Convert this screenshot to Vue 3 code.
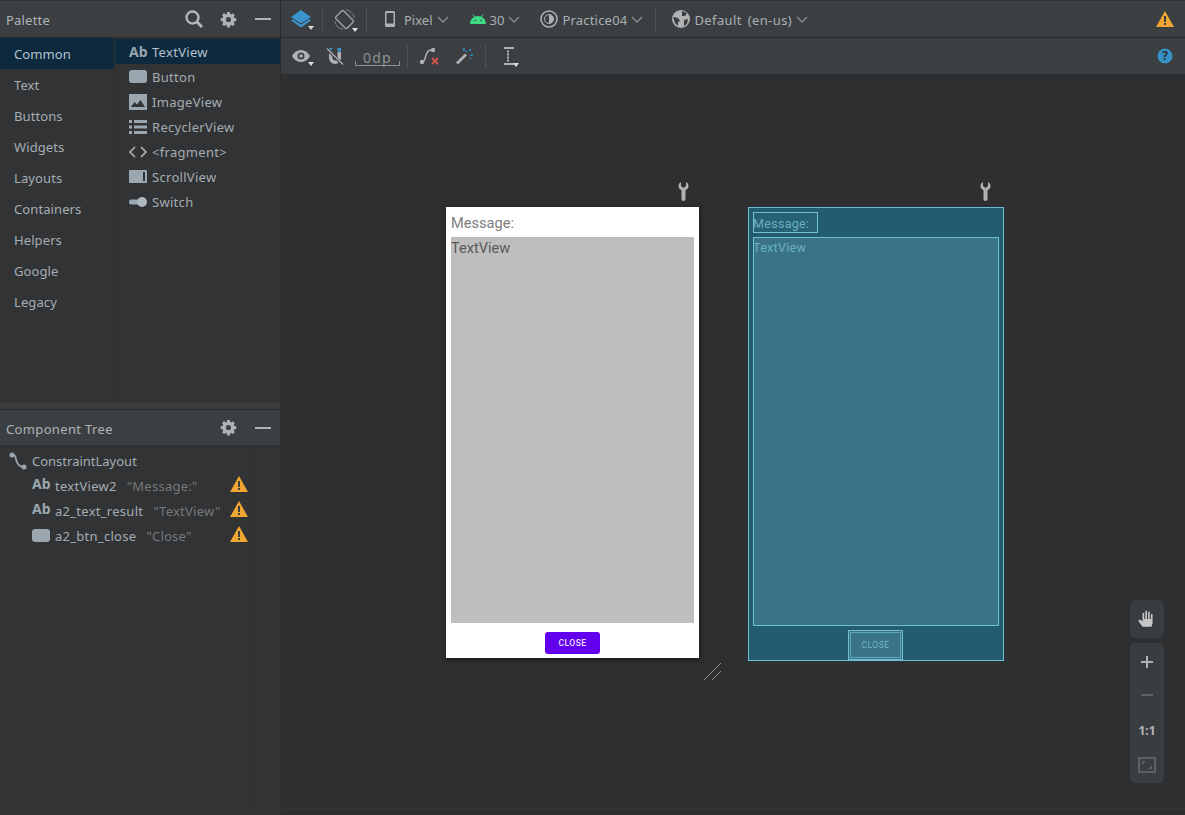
<script setup>
const categories = ['Common', 'Text', 'Buttons', 'Widgets', 'Layouts', 'Containers', 'Helpers', 'Google', 'Legacy']
const widgets = [
  { name: 'TextView', icon: 'ab' },
  { name: 'Button', icon: 'button' },
  { name: 'ImageView', icon: 'image' },
  { name: 'RecyclerView', icon: 'list' },
  { name: '<fragment>', icon: 'code' },
  { name: 'ScrollView', icon: 'scroll' },
  { name: 'Switch', icon: 'switch' }
]
const tree = [
  { id: 'textView2', value: '"Message:"', icon: 'ab' },
  { id: 'a2_text_result', value: '"TextView"', icon: 'ab' },
  { id: 'a2_btn_close', value: '"Close"', icon: 'button' }
]
const gearPath = 'M6.6 0h2.8l.4 2.1 1.2.5L12.8 1.4l2 2-1.2 1.8.5 1.2 2.1.4v2.8l-2.1.4-.5 1.2 1.2 1.8-2 2-1.8-1.2-1.2.5-.4 2.1H6.6l-.4-2.1-1.2-.5-1.8 1.2-2-2 1.2-1.8-.5-1.2L-.2 9.4V6.6l2.1-.4.5-1.2L1.2 3.2l2-2L5 2.6l1.2-.5zM8 5.3a2.7 2.7 0 1 0 0 5.4 2.7 2.7 0 0 0 0-5.4z'
const wrenchPath = 'M2.500 0v4L5 6l2.500-2V0C9.200.8 10 2.400 10 4c0 2-1.200 3.400-3 4.200V17a2 2 0 0 1-4 0V8.200C1.200 7.400 0 6 0 4 0 2.400.8.8 2.500 0z'
</script>

<template>
  <div class="studio">
    <aside class="side">
      <header class="head palette-head">
        <span class="head-title">Palette</span>
        <svg class="ic search" viewBox="0 0 18 18"><circle cx="7.500" cy="7.500" r="6" fill="none" stroke="#b4b8bb" stroke-width="2.400"/><path d="M11.500 11.500l5.500 5.500" stroke="#b4b8bb" stroke-width="3"/></svg>
        <svg class="ic gear" viewBox="-1 -1 18 18"><path :d="gearPath" fill="#afb1b3" fill-rule="evenodd"/></svg>
        <span class="minus"></span>
      </header>
      <div class="palette">
        <ul class="cats">
          <li v-for="(c, i) in categories" :key="c" :class="{ on: i === 0 }">{{ c }}</li>
        </ul>
        <ul class="widgets">
          <li v-for="(w, i) in widgets" :key="w.name" :class="{ on: i === 0 }">
            <span class="wicon">
              <b v-if="w.icon === 'ab'" class="ab">Ab</b>
              <span v-else-if="w.icon === 'button'" class="btn-ic"></span>
              <svg v-else-if="w.icon === 'image'" viewBox="0 0 18 16" width="18" height="16"><rect width="18" height="16" fill="#9aa7b0"/><path d="M2 13l3.500-5 2.500 2.500L11.500 6 16 13z" fill="#313335"/></svg>
              <svg v-else-if="w.icon === 'list'" viewBox="0 0 18 14" width="18" height="14"><path d="M0 0h3v3H0zM5 0h13v3H5zM0 5.500h3v3H0zM5 5.500h13v3H5zM0 11h3v3H0zM5 11h13v3H5z" fill="#9aa7b0"/></svg>
              <svg v-else-if="w.icon === 'code'" viewBox="0 0 18 12" width="18" height="12"><path d="M6 1L1 6l5 5M12 1l5 5-5 5" fill="none" stroke="#afb1b3" stroke-width="1.600"/></svg>
              <svg v-else-if="w.icon === 'scroll'" viewBox="0 0 18 13" width="18" height="13"><rect width="18" height="13" rx="1" fill="#9aa7b0"/><rect x="14" y="2" width="2" height="9" fill="#313335"/></svg>
              <svg v-else viewBox="0 0 18 10" width="18" height="10"><rect x="0" y="2.500" width="10" height="5" rx="2" fill="#9aa7b0"/><circle cx="13" cy="5" r="5" fill="#afb8bf"/></svg>
            </span>
            <span class="wname">{{ w.name }}</span>
          </li>
        </ul>
      </div>
      <div class="split"></div>
      <header class="head tree-head">
        <span class="head-title spaced">Component Tree</span>
        <svg class="ic gear" viewBox="-1 -1 18 18"><path :d="gearPath" fill="#afb1b3" fill-rule="evenodd"/></svg>
        <span class="minus"></span>
      </header>
      <div class="tree">
        <div class="tree-main">
          <div class="root">
            <svg viewBox="0 0 18 18" width="18" height="18"><path d="M3 3c4 0 3 1.500 4.500 6S11 15 15 15" fill="none" stroke="#9aa7b0" stroke-width="1.800"/><circle cx="3" cy="3" r="2.500" fill="#9aa7b0"/><circle cx="15" cy="15" r="2.500" fill="#9aa7b0"/></svg>
            <span>ConstraintLayout</span>
          </div>
          <div v-for="t in tree" :key="t.id" class="node">
            <span class="nicon">
              <b v-if="t.icon === 'ab'" class="ab">Ab</b>
              <span v-else class="btn-ic"></span>
            </span>
            <span class="nid">{{ t.id }}</span>
            <span class="nval">{{ t.value }}</span>
            <svg class="warn" viewBox="0 0 18 16" width="18" height="16"><path d="M9 0l9 16H0z" fill="#f0a732"/><path d="M8 5h2v6H8zM8 12h2v2H8z" fill="#3c3f41"/></svg>
          </div>
        </div>
        <div class="tree-gutter"></div>
      </div>
    </aside>

    <main class="main">
      <div class="bar bar-top">
        <span class="tool layers">
          <svg viewBox="0 0 20 18" width="20" height="18"><path d="M10 0l10 7-10 6.500L0 7z" fill="#3a95cf"/><path d="M0 10.500l2-1.300 8 5.500 8-5.500 2 1.300-10 7z" fill="#3a95cf"/></svg>
          <i class="corner"></i>
        </span>
        <span class="vsep"></span>
        <span class="tool rotate">
          <svg viewBox="0 0 21 21" width="21" height="21"><rect x="5" y="2.500" width="11" height="16" rx="1.500" transform="rotate(-45 10.500 10.500)" fill="none" stroke="#a2a4a6" stroke-width="1.300"/><path d="M12 .8A9.800 9.800 0 0 1 20.200 9M9 20.200A9.800 9.800 0 0 1 .8 12" fill="none" stroke="#7b7d80" stroke-width="1"/></svg>
          <i class="corner"></i>
        </span>
        <span class="vsep"></span>
        <span class="tool drop device">
          <svg viewBox="0 0 10 16" width="10" height="16"><path d="M1.500 0h7A1.500 1.500 0 0 1 10 1.500v13A1.500 1.500 0 0 1 8.500 16h-7A1.500 1.500 0 0 1 0 14.500v-13A1.500 1.500 0 0 1 1.500 0zM1.500 2v10.500h7V2z" fill="#afb1b3" fill-rule="evenodd"/></svg>
          <span>Pixel</span><svg class="chev" viewBox="0 0 12 7"><path d="M1 1l5 5 5-5" fill="none" stroke="#7f8b91" stroke-width="1.500"/></svg>
        </span>
        <span class="tool drop api">
          <svg viewBox="0 0 16 10" width="16" height="10"><path d="M0 10a8 8 0 0 1 16 0z" fill="#3ddc84"/><path d="M3 .5l2 3M13 .5l-2 3" stroke="#3ddc84" stroke-width="1"/><circle cx="5" cy="6.500" r=".8" fill="#3c3f41"/><circle cx="11" cy="6.500" r=".8" fill="#3c3f41"/></svg>
          <span>30</span><svg class="chev" viewBox="0 0 12 7"><path d="M1 1l5 5 5-5" fill="none" stroke="#7f8b91" stroke-width="1.500"/></svg>
        </span>
        <span class="tool drop theme">
          <svg viewBox="0 0 18 18" width="18" height="18"><circle cx="9" cy="9" r="8" fill="none" stroke="#afb1b3" stroke-width="1.500"/><circle cx="9" cy="9" r="4.500" fill="none" stroke="#afb1b3" stroke-width="1"/><path d="M9 4.500a4.500 4.500 0 0 1 0 9z" fill="#afb1b3"/></svg>
          <span>Practice04</span><svg class="chev" viewBox="0 0 12 7"><path d="M1 1l5 5 5-5" fill="none" stroke="#7f8b91" stroke-width="1.500"/></svg>
        </span>
        <span class="vsep"></span>
        <span class="tool drop locale">
          <svg viewBox="0 0 18 18" width="18" height="18"><circle cx="9" cy="9" r="9" fill="#afb1b3"/><path d="M1 7l5 1 2 3-2 1 0 4-3-3zM10 1l5 2-2 3-3 0zM12 10l4-1-1 5-3 2z" fill="#3c3f41"/></svg>
          <span>Default (en-us)</span><svg class="chev" viewBox="0 0 12 7"><path d="M1 1l5 5 5-5" fill="none" stroke="#7f8b91" stroke-width="1.500"/></svg>
        </span>
        <svg class="warn top-warn" viewBox="0 0 18 16" width="18" height="16"><path d="M9 0l9 16H0z" fill="#f0a732"/><path d="M8 5h2v6H8zM8 12h2v2H8z" fill="#3c3f41"/></svg>
      </div>
      <div class="bar bar-sub">
        <span class="tool eye">
          <svg viewBox="0 0 18 12" width="18" height="12"><path d="M0 6c4-8 14-8 18 0-4 8-14 8-18 0z" fill="#afb1b3"/><circle cx="9" cy="6" r="3.500" fill="#3c3f41"/><circle cx="9" cy="6" r="1.800" fill="#afb1b3"/></svg>
          <i class="corner"></i>
        </span>
        <span class="tool magnet">
          <svg viewBox="0 0 18 18" width="18" height="18"><path d="M3 5v6a6 6 0 0 0 12 0V5h-3.500v6a2.500 2.500 0 0 1-5 0V5z" fill="#afb1b3"/><path d="M11.500 1H15v3.500h-3.500z" fill="#3a95cf"/><path d="M3 1h3.500L5 3.500z" fill="#3a95cf"/><path d="M1 2l15 15" stroke="#3c3f41" stroke-width="3"/><path d="M1 1.500l16 16" stroke="#afb1b3" stroke-width="1.300"/></svg>
        </span>
        <span class="margin">0dp</span>
        <span class="vsep"></span>
        <span class="tool clear">
          <svg viewBox="0 0 20 18" width="20" height="18"><path d="M3 15c5 0 2-12 9-12" fill="none" stroke="#afb1b3" stroke-width="1.500"/><circle cx="3" cy="15" r="2.200" fill="#afb1b3"/><circle cx="14" cy="3" r="2.200" fill="#afb1b3"/><path d="M13 11l6 6M19 11l-6 6" stroke="#d9534f" stroke-width="1.800"/></svg>
        </span>
        <span class="tool wand">
          <svg viewBox="0 0 18 18" width="18" height="18"><path d="M1 15.500L10 6.500l2 2L3 17.500z" fill="#afb1b3"/><path d="M9 1v3M14 4l2-2M15 8h3M11 4l1 1M16 12l-1-1" stroke="#3592c4" stroke-width="1.500"/></svg>
        </span>
        <span class="vsep"></span>
        <span class="tool guide">
          <svg viewBox="0 0 14 18" width="14" height="18"><path d="M2 1h10M2 17h10" stroke="#afb1b3" stroke-width="2"/><path d="M6 3.500v11" stroke="#afb1b3" stroke-width="2" stroke-dasharray="2 1"/></svg>
          <i class="corner"></i>
        </span>
        <svg class="help" viewBox="0 0 16 16" width="16" height="16"><circle cx="8" cy="8" r="7.500" fill="#3592c4"/><text x="8" y="12" text-anchor="middle" class="help-q">?</text></svg>
      </div>

      <div class="canvas">
        <svg class="wrench w1" viewBox="0 0 10 19" width="11" height="19"><path :d="wrenchPath" fill="#afb1b3"/></svg>
        <svg class="wrench w2" viewBox="0 0 10 19" width="11" height="19"><path :d="wrenchPath" fill="#afb1b3"/></svg>

        <section class="phone">
          <div class="msg">Message:</div>
          <div class="result">TextView</div>
          <div class="close-row"><button class="close">CLOSE</button></div>
        </section>
        <svg class="resize" viewBox="0 0 18 18" width="18" height="18"><path d="M0 17L17 0M8 17l9-9" stroke="#8a8c8e" stroke-width="1"/></svg>

        <section class="blueprint">
          <div class="bp-msg">Message:</div>
          <div class="bp-result">TextView</div>
          <div class="bp-close-row"><div class="bp-close">CLOSE</div></div>
        </section>

        <div class="pan">
          <svg viewBox="0 0 18 18" width="20" height="20"><path d="M5 16L1 10.500l1.500-1L5 11V3.500h1.500V9h1V1.500H9V9h1V2.500h1.500V9h1V4.500H14V13l-1 3z" fill="#c4c6c8"/></svg>
        </div>
        <div class="zoom">
          <svg viewBox="0 0 14 14" width="14" height="14"><path d="M6 1h2v5h5v2H8v5H6V8H1V6h5z" fill="#afb1b3"/></svg>
          <svg viewBox="0 0 14 14" width="14" height="14"><path d="M1 6h12v2H1z" fill="#5e6062"/></svg>
          <span class="one">1:1</span>
          <svg viewBox="0 0 18 16" width="18" height="16"><path d="M1 1h16v14H1z" fill="none" stroke="#5e6062" stroke-width="2"/><path d="M4 8V4h4zM14 8v4h-4z" fill="#5e6062"/></svg>
        </div>
      </div>
      <div class="bottom-line"></div>
    </main>
  </div>
</template>

<style scoped>
.studio {
  width: 1185px;
  height: 815px;
  display: flex;
  overflow: hidden;
  background: #2d2f31;
  font-family: "Noto Sans", "Open Sans", sans-serif;
  font-size: 13px;
  color: #a9b7c6;
}
ul { list-style: none; margin: 0; padding: 0; }
.side {
  width: 281px;
  flex: none;
  height: 815px;
  display: flex;
  flex-direction: column;
  background: #313335;
  border-right: 1px solid #2b2d2e;
  box-sizing: border-box;
}
.head {
  display: flex;
  align-items: center;
  background: #3c3f41;
  flex: none;
  box-sizing: border-box;
  padding: 0 9px 0 6px;
}
.palette-head {
  height: 38px;
  border-top: 1px solid #323232;
  border-bottom: 1px solid #2b2b2b;
}
.head-title { flex: 1; color: #aeb4b7; font-size: 13px; letter-spacing: .2px; margin-top: 2px; }
.spaced { letter-spacing: .35px; }
.ic { display: block; flex: none; }
.search { width: 18px; height: 18px; margin-right: 17px; }
.gear { width: 17px; height: 17px; margin-right: 18px; }
.minus { width: 16px; height: 2px; background: #afb1b3; flex: none; }
.palette { display: flex; height: 365px; flex: none; }
.cats { width: 114px; flex: none; border-right: 1px solid #2f3133; }
.cats li {
  height: 31px;
  line-height: 33px;
  padding-left: 14px;
  color: #a5adb3;
  letter-spacing: .1px;
}
.cats li.on { background: #0d293e; color: #b3c2cc; }
.widgets { flex: 1; padding-top: 1px; }
.widgets li {
  height: 25px;
  display: flex;
  align-items: center;
  padding-left: 14px;
  color: #a5adb3;
}
.widgets li.on { background: #0d293e; color: #b3c2cc; }
.wicon { width: 23px; flex: none; display: flex; align-items: center; }
.wicon svg { display: block; }
.wname { white-space: nowrap; letter-spacing: .3px; }
.ab { font-weight: 700; color: #9aa7b0; font-size: 14px; line-height: 16px; }
.btn-ic { display: block; width: 18px; height: 13px; border-radius: 3px; background: #9aa7b0; }
.split { height: 6px; background: #3a3c3e; flex: none; }
.tree-head {
  height: 36px;
  border-top: 1px solid #2b2b2b;
}
.tree { flex: 1; display: flex; min-height: 0; padding-bottom: 8px; }
.tree-main { width: 254px; flex: none; box-sizing: border-box; border-right: 1px solid #2b2d2e; padding-left: 9px; padding-top: 3px; }
.tree-gutter { flex: 1; }
.root { height: 25px; display: flex; align-items: center; gap: 5px; color: #a5adb3; }
.node { height: 25px; display: flex; align-items: center; padding-left: 23px; color: #a5adb3; position: relative; }
.nicon { width: 23px; flex: none; display: flex; align-items: center; }
.nicon .ab { margin-top: -4px; }
.nid { letter-spacing: .28px; white-space: nowrap; }
.nval { margin-left: 10px; color: #76797b; letter-spacing: .25px; white-space: nowrap; }
.warn { display: block; }
.node .warn { position: absolute; left: 221px; top: 3px; }
.main { flex: 1; min-width: 0; display: flex; flex-direction: column; }
.bar { display: flex; align-items: center; background: #3c3f41; flex: none; box-sizing: border-box; }
.bar-top { height: 38px; border-top: 1px solid #323232; border-bottom: 1px solid #2b2b2b; padding-left: 10px; }
.bar-sub { height: 37px; padding-left: 11px; border-bottom: 1px solid #2d2f31; }
.tool { display: flex; align-items: center; position: relative; color: #a9b0b5; flex: none; }
.tool svg { display: block; flex: none; }
.drop > span { margin-top: 2px; }
.corner {
  position: absolute;
  right: -3px;
  bottom: -2px;
  width: 0;
  height: 0;
  border: 3px solid transparent;
  border-top: 4px solid #dcdcdc;
  border-bottom: 0;
}
.vsep { width: 1px; height: 23px; background: #505354; flex: none; }
.layers { margin-right: 11px; }
.rotate { margin: 0 11px 0 11px; }
.chev { width: 12px; height: 7px; margin-left: 4px; }
.device { margin-left: 18px; }
.device span { margin-left: 9px; }
.api { margin-left: 21px; }
.api span { margin-left: 4px; }
.theme { margin-left: 20px; }
.theme span { margin-left: 4px; letter-spacing: .2px; }
.theme { margin-right: 12px; }
.locale { margin-left: 16px; }
.locale span { margin-left: 4px; letter-spacing: .4px; word-spacing: 2px; }
.top-warn { margin-left: auto; margin-right: 11px; }
.eye { margin-right: 16px; }
.eye .corner { right: -4px; bottom: -4px; }
.magnet { margin-right: 11px; }
.margin {
  width: 45px;
  height: 16px;
  line-height: 15px;
  text-align: center;
  flex: none;
  color: #8d9296;
  font-family: "Noto Sans", sans-serif;
  font-size: 14px;
  letter-spacing: 1.200px;
  box-sizing: border-box;
  margin-right: 7px;
  margin-top: 3px;
  background:
    linear-gradient(#8d9296, #8d9296) left bottom / 100% 1px no-repeat,
    linear-gradient(#8d9296, #8d9296) left bottom / 1px 5px no-repeat,
    linear-gradient(#8d9296, #8d9296) right bottom / 1px 5px no-repeat;
}
.clear { margin: 0 16px 0 11px; }
.wand { margin-right: 12px; }
.guide { margin-left: 16px; }
.help { margin-left: auto; margin-right: 12px; display: block; }
.help-q { font: 700 12px "Noto Sans", sans-serif; fill: #2b2d2f; }
.canvas { flex: 1; position: relative; background: #2d2f31; }
.bottom-line { height: 6px; flex: none; background: #2d2f31; border-top: 1px solid #343638; }
.wrench { position: absolute; top: 107px; display: block; }
.w1 { left: 397px; }
.w2 { left: 699px; }
.phone {
  position: absolute;
  left: 165px;
  top: 132px;
  width: 253px;
  height: 451px;
  background: #fff;
  box-shadow: 1px 2px 5px #1a1a1a;
  box-sizing: border-box;
  padding: 0 5px;
  display: flex;
  flex-direction: column;
  font-family: Roboto, sans-serif;
}
.msg { height: 30px; line-height: 33px; color: #7d7d7d; font-size: 14.600px; }
.result {
  height: 386px;
  background: #bebebe;
  color: #595959;
  font-size: 14.600px;
  line-height: 23px;
  flex: none;
}
.close-row { display: flex; justify-content: center; padding-top: 9px; }
.close {
  width: 55px;
  height: 22px;
  padding: 0;
  border: 0;
  border-radius: 3px;
  background: #6200ee;
  color: #ece0fd;
  font: 500 8.500px Roboto, sans-serif;
  letter-spacing: .5px;
}
.resize { position: absolute; left: 423px; top: 588px; display: block; }
.blueprint {
  position: absolute;
  left: 467px;
  top: 132px;
  width: 256px;
  height: 454px;
  background: #235c70;
  border: 1px solid #6ebfd3;
  box-sizing: border-box;
  padding: 4px;
  font-family: Roboto, sans-serif;
  color: #69b0c3;
  display: flex;
  flex-direction: column;
}
.bp-msg {
  width: 65px;
  height: 21px;
  line-height: 22px;
  box-sizing: border-box;
  border: 1px solid #6ebfd3;
  font-size: 12.500px;
  letter-spacing: .3px;
  text-indent: -1px;
  flex: none;
  background: #276175;
}
.bp-result {
  margin-top: 4px;
  width: 246px;
  height: 389px;
  box-sizing: border-box;
  border: 1px solid #6ebfd3;
  background: #3a7387;
  font-size: 12.500px;
  letter-spacing: .3px;
  text-indent: -1px;
  line-height: 20px;
  flex: none;
}
.bp-close-row { display: flex; justify-content: center; padding: 4px 1px 0 0; }
.bp-close {
  width: 55px;
  height: 30px;
  box-sizing: border-box;
  border: 1px solid #6ebfd3;
  outline: 1px solid #5aa6ba;
  outline-offset: -3px;
  background: #3a7387;
  color: #70b8ca;
  font-size: 8.500px;
  letter-spacing: .5px;
  line-height: 29px;
  text-align: center;
}
.pan, .zoom {
  position: absolute;
  left: 849px;
  width: 34px;
  border-radius: 5px;
  background: #3a3d3f;
  display: flex;
  flex-direction: column;
  align-items: center;
}
.pan { top: 525px; height: 38px; justify-content: center; }
.zoom { top: 568px; height: 140px; box-sizing: border-box; padding: 12px 0 10px; justify-content: space-between; }
.pan svg, .zoom svg { display: block; }
.one { color: #b4b6b8; font: 700 12px/14px "Noto Sans", sans-serif; margin-top: 2px; }
</style>
<style>
html, body { margin: 0; background: #2d2f31; }
</style>
